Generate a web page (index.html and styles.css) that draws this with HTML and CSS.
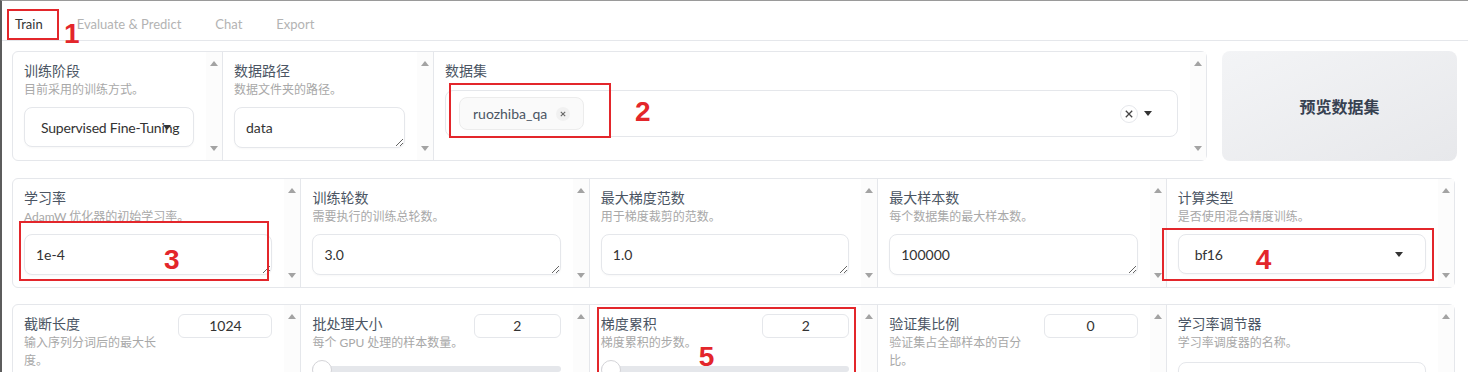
FILE: index.html
```html
<!DOCTYPE html>
<html lang="zh-CN">
<head>
    <meta charset="UTF-8">
    <meta name="viewport" content="width=device-width, initial-scale=1">
    <title>LLaMA Board</title>
    <link rel="stylesheet" href="styles.css">
</head>
<body>
<div class="window">

    <nav class="tabs">
        <span class="tab active">Train</span>
        <span class="tab">Evaluate &amp; Predict</span>
        <span class="tab">Chat</span>
        <span class="tab">Export</span>
        <span class="mark mark-1"></span>
        <span class="tag tag-1">1</span>
    </nav>

    <section class="panel">

        <!-- 第一行：阶段 / 路径 / 数据集 -->
        <div class="row">
            <div class="form">
                <div class="cell cell-stage">
                    <div class="body">
                        <div class="label">训练阶段</div>
                        <div class="info">目前采用的训练方式。</div>
                        <div class="select"><span class="value">Supervised Fine-Tuning</span><i class="caret"></i></div>
                    </div>
                    <div class="scroll"><i class="up"></i><i class="down"></i></div>
                </div>
                <div class="cell cell-path">
                    <div class="body">
                        <div class="label">数据路径</div>
                        <div class="info">数据文件夹的路径。</div>
                        <textarea class="text" rows="1">data</textarea>
                    </div>
                    <div class="scroll"><i class="up"></i><i class="down"></i></div>
                </div>
                <div class="cell">
                    <div class="body">
                        <div class="label">数据集</div>
                        <div class="multi">
                            <span class="chip">ruozhiba_qa
                                <svg class="chip-x" width="14" height="14" viewBox="0 0 14 14"><circle cx="7" cy="7" r="7" fill="#f1f1f1"/><path d="M4.8 4.8l4.4 4.4M9.2 4.8l-4.4 4.4" stroke="#666" stroke-width="1.1"/></svg>
                            </span>
                            <span class="fill"></span>
                            <svg class="clear" width="18" height="18" viewBox="0 0 18 18"><circle cx="9" cy="9" r="8.5" fill="#fff" stroke="#e5e7eb"/><path d="M5.8 5.8l6.4 6.4M12.2 5.8l-6.4 6.4" stroke="#444" stroke-width="1.3"/></svg>
                            <i class="caret"></i>
                        </div>
                    </div>
                    <div class="scroll"><i class="up"></i><i class="down"></i></div>
                    <span class="mark mark-2"></span>
                    <span class="tag tag-2">2</span>
                </div>
            </div>
            <div class="preview">预览数据集</div>
        </div>

        <!-- 第二行 -->
        <div class="row">
            <div class="form wide">
                <div class="cell">
                    <div class="body">
                        <div class="label">学习率</div>
                        <div class="info">AdamW 优化器的初始学习率。</div>
                        <textarea class="text" rows="1">1e-4</textarea>
                    </div>
                    <div class="scroll"><i class="up"></i><i class="down"></i></div>
                    <span class="mark mark-3"></span>
                    <span class="tag tag-3">3</span>
                </div>
                <div class="cell">
                    <div class="body">
                        <div class="label">训练轮数</div>
                        <div class="info">需要执行的训练总轮数。</div>
                        <textarea class="text" rows="1">3.0</textarea>
                    </div>
                    <div class="scroll"><i class="up"></i><i class="down"></i></div>
                </div>
                <div class="cell">
                    <div class="body">
                        <div class="label">最大梯度范数</div>
                        <div class="info">用于梯度裁剪的范数。</div>
                        <textarea class="text" rows="1">1.0</textarea>
                    </div>
                    <div class="scroll"><i class="up"></i><i class="down"></i></div>
                </div>
                <div class="cell">
                    <div class="body">
                        <div class="label">最大样本数</div>
                        <div class="info">每个数据集的最大样本数。</div>
                        <textarea class="text" rows="1">100000</textarea>
                    </div>
                    <div class="scroll"><i class="up"></i><i class="down"></i></div>
                </div>
                <div class="cell">
                    <div class="body">
                        <div class="label">计算类型</div>
                        <div class="info">是否使用混合精度训练。</div>
                        <div class="select"><span class="value">bf16</span><i class="caret"></i></div>
                    </div>
                    <div class="scroll"><i class="up"></i><i class="down"></i></div>
                    <span class="mark mark-4"></span>
                    <span class="tag tag-4">4</span>
                </div>
            </div>
        </div>

        <!-- 第三行 -->
        <div class="row row-low">
            <div class="form wide">
                <div class="cell">
                    <div class="body">
                        <div class="head">
                            <div class="head-text">
                                <div class="label">截断长度</div>
                                <div class="info">输入序列分词后的最大长度。</div>
                            </div>
                            <div class="num wide-num">1024</div>
                        </div>
                        <div class="slider"></div>
                    </div>
                    <div class="scroll"><i class="up"></i><i class="down"></i></div>
                </div>
                <div class="cell">
                    <div class="body">
                        <div class="head">
                            <div class="head-text">
                                <div class="label">批处理大小</div>
                                <div class="info">每个 GPU 处理的样本数量。</div>
                            </div>
                            <div class="num">2</div>
                        </div>
                        <div class="slider"></div>
                    </div>
                    <div class="scroll"><i class="up"></i><i class="down"></i></div>
                </div>
                <div class="cell">
                    <div class="body">
                        <div class="head">
                            <div class="head-text">
                                <div class="label">梯度累积</div>
                                <div class="info">梯度累积的步数。</div>
                            </div>
                            <div class="num">2</div>
                        </div>
                        <div class="slider"></div>
                    </div>
                    <div class="scroll"><i class="up"></i><i class="down"></i></div>
                    <span class="mark mark-5"></span>
                    <span class="tag tag-5">5</span>
                </div>
                <div class="cell">
                    <div class="body">
                        <div class="head">
                            <div class="head-text">
                                <div class="label">验证集比例</div>
                                <div class="info">验证集占全部样本的百分比。</div>
                            </div>
                            <div class="num wide-num">0</div>
                        </div>
                        <div class="slider"></div>
                    </div>
                    <div class="scroll"><i class="up"></i><i class="down"></i></div>
                </div>
                <div class="cell">
                    <div class="body">
                        <div class="label">学习率调节器</div>
                        <div class="info">学习率调度器的名称。</div>
                        <div class="select low"></div>
                    </div>
                    <div class="scroll"><i class="up"></i><i class="down"></i></div>
                </div>
            </div>
        </div>

    </section>
</div>
</body>
</html>
```

FILE: styles.css
```css
* {
	box-sizing:border-box;
}
html,body {
	width:100%;
	height:100%;
	margin:0;
	padding:0;
	overflow:hidden;
	background:#fff;
}
body {
	font-family:Lato, "Noto Sans CJK SC", sans-serif;
	color:#374151;
}
.window {
	height:372px;
	border-top:1px solid #9a9a9a;
	border-left:2px solid #5c5c5c;
}

/* tabs */
.tabs {
	position:relative;
	display:flex;
	height:40px;
	padding:8px 0 0 5px;
	border-bottom:1px solid #e5e7eb;
}
.tab {
	padding:0 8px;
	margin-right:18px;
	line-height:31px;
	font-size:13px;
	color:#b3b3b3;
}
.tab.active {
	color:#333;
}

/* layout */
.panel {
	padding:10px 11px 0 10px;
}
.row {
	display:flex;
	gap:15px;
}
.row + .row {
	margin-top:17px;
}
.row.row-low {
	margin-top:16px;
}
.form {
	flex:1;
	display:flex;
	min-width:0;
	border:1px solid #e5e7eb;
	border-radius:6px;
	background:#fff;
}
.form.wide {
	margin-right:2px;
}
.cell {
	position:relative;
	flex:1;
	display:flex;
	min-width:0;
}
.cell + .cell {
	border-left:1px solid #e5e7eb;
}
.cell-stage {
	flex:0 0 209px;
}
.cell-path {
	flex:0 0 211px;
}
.body {
	flex:1;
	min-width:0;
	padding:9px 12px 12px 11px;
}
.label {
	font-size:14px;
	line-height:20px;
	color:#4b5563;
}
.info {
	font-size:12px;
	line-height:18px;
	color:#a8a8a8;
}

/* fake scrollbar */
.scroll {
	flex:0 0 16px;
	display:flex;
	flex-direction:column;
	justify-content:space-between;
	align-items:center;
	padding:9px 0;
	background:#fcfcfc;
}
.scroll .up {
	border-left:4px solid transparent;
	border-right:4px solid transparent;
	border-bottom:5px solid #a3a3a3;
}
.scroll .down {
	border-left:4px solid transparent;
	border-right:4px solid transparent;
	border-top:5px solid #a3a3a3;
}

/* inputs */
.select, .text {
	display:flex;
	align-items:center;
	width:100%;
	height:40px;
	margin-top:8px;
	border:1px solid #e5e7eb;
	border-radius:8px;
	background:#fff;
	box-shadow:0 1px 2px rgba(0,0,0,0.03);
	font-size:14px;
	color:#333;
}
.select {
	padding:0 22px 0 16px;
}
.select.low {
	margin-top:10px;
}
.select .value {
	flex:1;
	min-width:0;
	white-space:nowrap;
	letter-spacing:-0.2px;
}
.caret {
	flex:none;
	width:0;
	height:0;
	border-left:4px solid transparent;
	border-right:4px solid transparent;
	border-top:5px solid #333;
}
.text {
	display:block;
	height:41px;
	padding:10px 11px;
	font-family:inherit;
	line-height:20px;
	resize:vertical;
	overflow:hidden;
	outline:none;
}

/* multi select */
.multi {
	display:flex;
	align-items:center;
	height:47px;
	margin-top:9px;
	padding:0 25px 0 13px;
	border:1px solid #e5e7eb;
	border-radius:8px;
}
.chip {
	display:flex;
	align-items:center;
	gap:9px;
	height:33px;
	padding:0 13px 0 13px;
	border:1px solid #ececec;
	border-radius:8px;
	background:#fafafa;
	font-size:14px;
	color:#4b5563;
}
.multi .fill {
	flex:1;
}
.multi .clear {
	margin-right:6px;
}

.preview {
	flex:0 0 235px;
	display:flex;
	align-items:center;
	justify-content:center;
	border-radius:8px;
	background:linear-gradient(to bottom right, #f3f4f6, #e7e8eb);
	font-size:16px;
	font-weight:700;
	color:#374151;
}

/* number + slider */
.head {
	display:flex;
	align-items:flex-start;
	gap:6px;
}
.head-text {
	flex:1;
	min-width:0;
}
.num {
	flex:0 0 87px;
	height:24px;
	border:1px solid #e5e7eb;
	border-radius:6px;
	text-align:center;
	font-size:14px;
	line-height:22px;
	color:#333;
}
.num.wide-num {
	flex-basis:94px;
}
.slider {
	position:relative;
	height:6px;
	margin:14px 0 0 0;
	border-radius:3px;
	background:#e5e7eb;
}
.slider::before {
	content:"";
	position:absolute;
	left:0;
	top:-6px;
	width:18px;
	height:18px;
	border:1px solid #d4d4d8;
	border-radius:50%;
	background:#fff;
}

/* red annotations */
.mark {
	position:absolute;
	z-index:5;
	border:2px solid #e3262b;
}
.tag {
	position:absolute;
	z-index:5;
	font:bold 28px/28px "Liberation Sans", sans-serif;
	color:#e3262b;
}
.mark-1 { left:5px; top:8px; width:52px; height:31px; }
.tag-1 { left:62px; top:19px; }
.mark-2 { left:15px; top:31px; width:162px; height:55px; }
.tag-2 { left:201px; top:46px; }
.mark-3 { left:6px; top:42px; width:250px; height:60px; }
.tag-3 { left:151px; top:67px; }
.mark-4 { left:-5px; top:49px; width:272px; height:53px; }
.tag-4 { left:89px; top:67px; }
.mark-5 { left:7px; top:2px; width:259px; height:80px; }
.tag-5 { left:109px; top:38px; }
```
